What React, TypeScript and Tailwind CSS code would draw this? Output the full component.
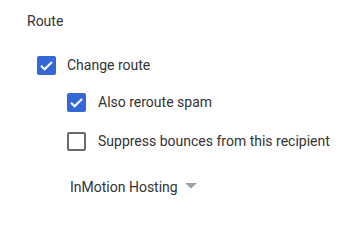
import React from "react";

function Checked() {
  return (
    <div className="w-[19px] h-[19px] rounded-[2px] bg-[#3468d6] flex items-center justify-center shrink-0">
      <svg width="19" height="19" viewBox="0 0 19 19">
        <polyline points="4,9.8 7.6,13.3 15,5.9" fill="none" stroke="#ffffff" strokeWidth="2.1" />
      </svg>
    </div>
  );
}

function Unchecked() {
  return <div className="w-[19px] h-[19px] rounded-[2px] border-2 border-[#6a6a6a] bg-white shrink-0" />;
}

export default function App() {
  return (
    <div
      className="w-[351px] h-[216px] bg-white text-[14px] leading-[20px] text-[#333333]"
      style={{ fontFamily: "Roboto, 'Noto Sans', sans-serif" }}
    >
      <div className="pt-[11px] pl-[27px]">Route</div>
      <div className="mt-[24px] pl-[37px] flex items-center h-5 gap-[11px]">
        <Checked />
        <span>Change route</span>
      </div>
      <div className="mt-[17px] pl-[67px] flex items-center h-5 gap-[12px]">
        <Checked />
        <span>Also reroute spam</span>
      </div>
      <div className="mt-[19px] pl-[67px] flex items-center h-5 gap-[12px]">
        <Unchecked />
        <span>Suppress bounces from this recipient</span>
      </div>
      <div className="mt-[26px] pl-[70px] flex items-center h-5 gap-[7px]">
        <span>InMotion Hosting</span>
        <svg width="12" height="6" viewBox="0 0 12 6" className="mb-[2px]">
          <polygon points="0,0 12,0 6,5.5" fill="#a0a0a0" />
        </svg>
      </div>
    </div>
  );
}
